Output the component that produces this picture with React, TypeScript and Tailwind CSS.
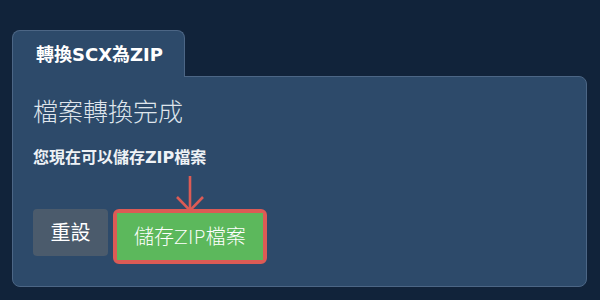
import React from 'react';

const font = { fontFamily: '"DejaVu Sans", "Noto Sans CJK TC", sans-serif' };

const DownArrow: React.FC = () => (
  <svg width="30" height="37" viewBox="0 0 30 37" fill="none" stroke="#dc5b55" strokeWidth="2.6" strokeLinecap="butt">
    <path d="M15 0 V34" />
    <path d="M2 21 L15 34.5 L28 21" />
  </svg>
);

const App: React.FC = () => {
  return (
    <div className="w-[600px] h-[300px] bg-[#11233a] pt-[30px] pl-3 pr-[13px]" style={font}>
      {/* Tab */}
      <div className="flex">
        <div className="relative z-10 -mb-px h-[47px] w-[173px] rounded-t-lg border border-b-0 border-[#4c6685] bg-[#2d4a6a] pl-[23px] pt-[15px] text-[18px] leading-[18px] font-bold text-white">
          轉換SCX為ZIP
        </div>
      </div>

      {/* Card */}
      <div className="h-[211px] rounded-b-lg rounded-tr-lg border border-[#4c6685] bg-[#2d4a6a] px-5">
        <h1 className="pt-[23px] text-[25px] leading-[25px] font-light text-[#dfe5ec]">檔案轉換完成</h1>
        <p className="mt-[25px] text-[16px] leading-4 font-bold text-[#eef2f6]">您現在可以儲存ZIP檔案</p>

        <div className="mt-[43px] flex items-start gap-[5px]">
          <button className="h-[47px] w-[75px] rounded bg-[#4b5b6c] text-[20px] text-white">重設</button>
          <div className="relative rounded-md border-4 border-[#dc5b55]">
            <div className="absolute bottom-full left-1/2 -translate-x-1/2">
              <DownArrow />
            </div>
            <button className="h-[47px] px-[17px] bg-[#5cb85c] text-[20px] font-light text-white">儲存ZIP檔案</button>
          </div>
        </div>
      </div>
    </div>
  );
};

export default App;
